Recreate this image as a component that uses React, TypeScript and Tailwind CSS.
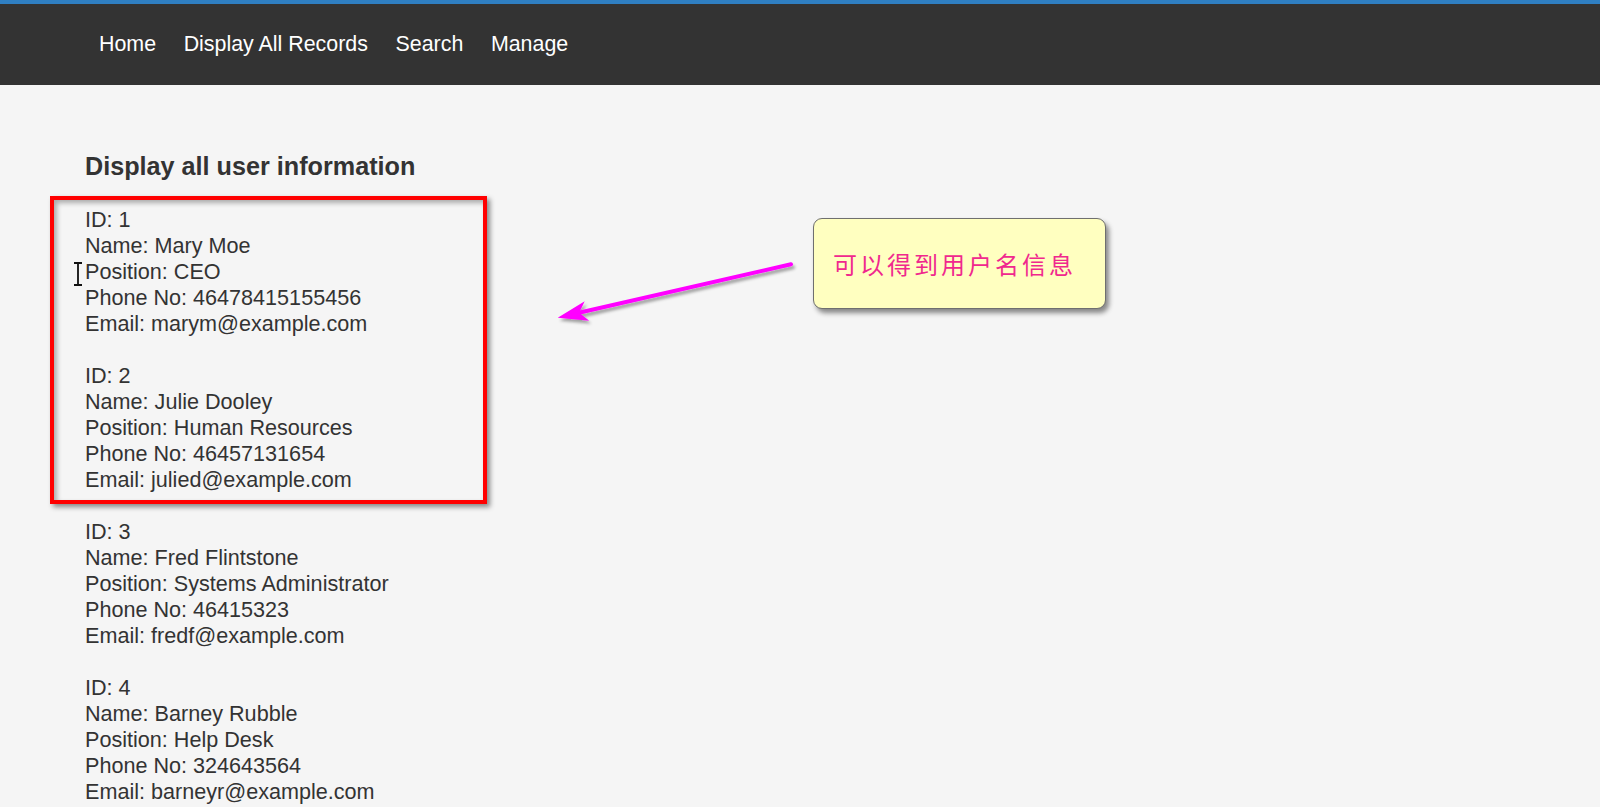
import React from "react";

const records = [
  { id: 1, name: "Mary Moe", position: "CEO", phone: "46478415155456", email: "marym@example.com" },
  { id: 2, name: "Julie Dooley", position: "Human Resources", phone: "46457131654", email: "julied@example.com" },
  { id: 3, name: "Fred Flintstone", position: "Systems Administrator", phone: "46415323", email: "fredf@example.com" },
  { id: 4, name: "Barney Rubble", position: "Help Desk", phone: "324643564", email: "barneyr@example.com" },
];

export default function App() {
  return (
    <div
      className="relative h-[807px] w-[1600px] overflow-hidden bg-[#f5f5f5] text-[#333333]"
      style={{ fontFamily: '"Liberation Sans", Arial, sans-serif' }}
    >
      <div className="h-[4px] bg-[#2f7fc2]" />
      <nav className="flex h-[81px] items-center gap-[27.6px] bg-[#333333] pb-[1px] pl-[99px] text-[21.4px] text-white">
        <a>Home</a>
        <a>Display All Records</a>
        <a>Search</a>
        <a>Manage</a>
      </nav>

      <main className="pl-[85px] pt-[66px]">
        <h3 className="text-[25.2px] font-bold leading-[30px]">Display all user information</h3>
        <div className="mt-[26px] text-[21.6px] leading-[26px]">
          {records.map((r) => (
            <div key={r.id} className="mb-[26px]">
              <div>ID: {r.id}</div>
              <div>Name: {r.name}</div>
              <div>Position: {r.position}</div>
              <div>Phone No: {r.phone}</div>
              <div>Email: {r.email}</div>
            </div>
          ))}
        </div>
      </main>

      {/* red highlight box */}
      <div className="absolute left-[50px] top-[196px] h-[308px] w-[437px] border-4 border-[#ff0000] shadow-[3px_3px_5px_rgba(0,0,0,0.45),inset_3px_3px_5px_rgba(0,0,0,0.3)]" />

      {/* text cursor */}
      <svg className="absolute left-[73px] top-[262px]" width="10" height="24" viewBox="0 0 10 24">
        <path d="M1 1 H9 M5 1 V23 M1 23 H9" stroke="#111" strokeWidth="1.8" fill="none" />
      </svg>

      {/* arrow */}
      <svg className="absolute left-[540px] top-[250px]" width="270" height="90" viewBox="0 0 270 90">
        <defs>
          <filter id="sh" x="-20%" y="-50%" width="140%" height="200%">
            <feDropShadow dx="2" dy="3" stdDeviation="1.6" floodColor="#000" floodOpacity="0.35" />
          </filter>
        </defs>
        <g filter="url(#sh)">
          <line x1="251" y1="14.3" x2="40" y2="62.5" stroke="#ff00ff" strokeWidth="4" strokeLinecap="round" />
          <polygon points="17.7,67.7 44.7,51.3 39.2,62.8 49.2,70.8" fill="#ff00ff" />
        </g>
      </svg>

      {/* callout */}
      <div className="absolute left-[813px] top-[218px] flex h-[91px] w-[293px] items-center rounded-[9px] border border-[#6f6f6f] bg-[#ffffc0] pl-[19px] shadow-[3px_4px_5px_rgba(0,0,0,0.45)]">
        <span
          className="text-[24px] tracking-[3px] text-[#f0288e]"
          style={{ fontFamily: '"Noto Sans CJK SC", "Liberation Sans", sans-serif' }}
        >
          可以得到用户名信息
        </span>
      </div>
    </div>
  );
}
